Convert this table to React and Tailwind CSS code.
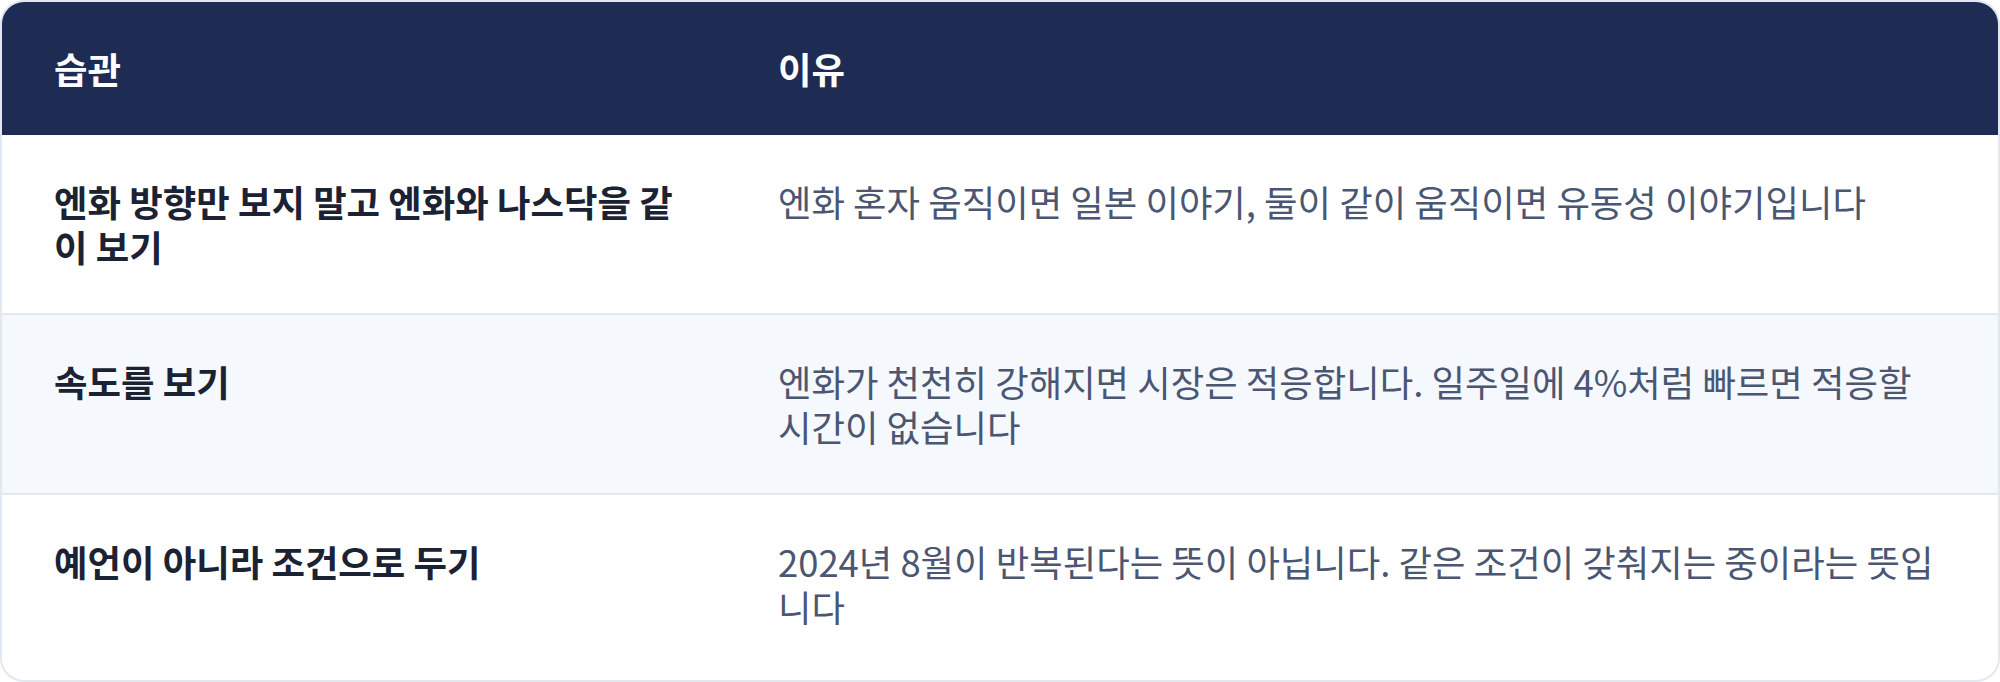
import React from 'react';

const rows = [
    {
        habit: '엔화 방향만 보지 말고 엔화와 나스닥을 같이 보기',
        reason: '엔화 혼자 움직이면 일본 이야기, 둘이 같이 움직이면 유동성 이야기입니다',
    },
    {
        habit: '속도를 보기',
        reason: '엔화가 천천히 강해지면 시장은 적응합니다. 일주일에 4%처럼 빠르면 적응할 시간이 없습니다',
    },
    {
        habit: '예언이 아니라 조건으로 두기',
        reason: '2024년 8월이 반복된다는 뜻이 아닙니다. 같은 조건이 갖춰지는 중이라는 뜻입니다',
    },
];

const App = () => {
    return (
        <div
            className="w-[2000px] h-[682px] bg-white"
            style={{ fontFamily: '"Noto Sans CJK KR", "Noto Sans", sans-serif' }}
        >
            <div className="h-full border-2 border-[#e2e8f0] rounded-3xl overflow-hidden bg-white text-[36.4px] leading-[45px]">
                {/* Header */}
                <div className="grid grid-cols-[724px_1fr] bg-[#1e2b53] text-white font-bold">
                    <div className="px-[52px] py-[44px]">습관</div>
                    <div className="pl-[52px] pr-[60px] py-[44px]">이유</div>
                </div>

                {/* Body */}
                {rows.map((row, i) => (
                    <div
                        key={i}
                        className={`grid grid-cols-[724px_1fr] ${i < rows.length - 1 ? 'border-b-2 border-[#e2e8f0]' : ''} ${i === 1 ? 'bg-[#f5f8fd]' : 'bg-white'}`}
                    >
                        <div className="px-[52px] py-[44px] font-bold text-[#1b2233]">{row.habit}</div>
                        <div className="pl-[52px] pr-[60px] py-[44px] text-[#4a5672]">{row.reason}</div>
                    </div>
                ))}
            </div>
        </div>
    );
};

export default App;
